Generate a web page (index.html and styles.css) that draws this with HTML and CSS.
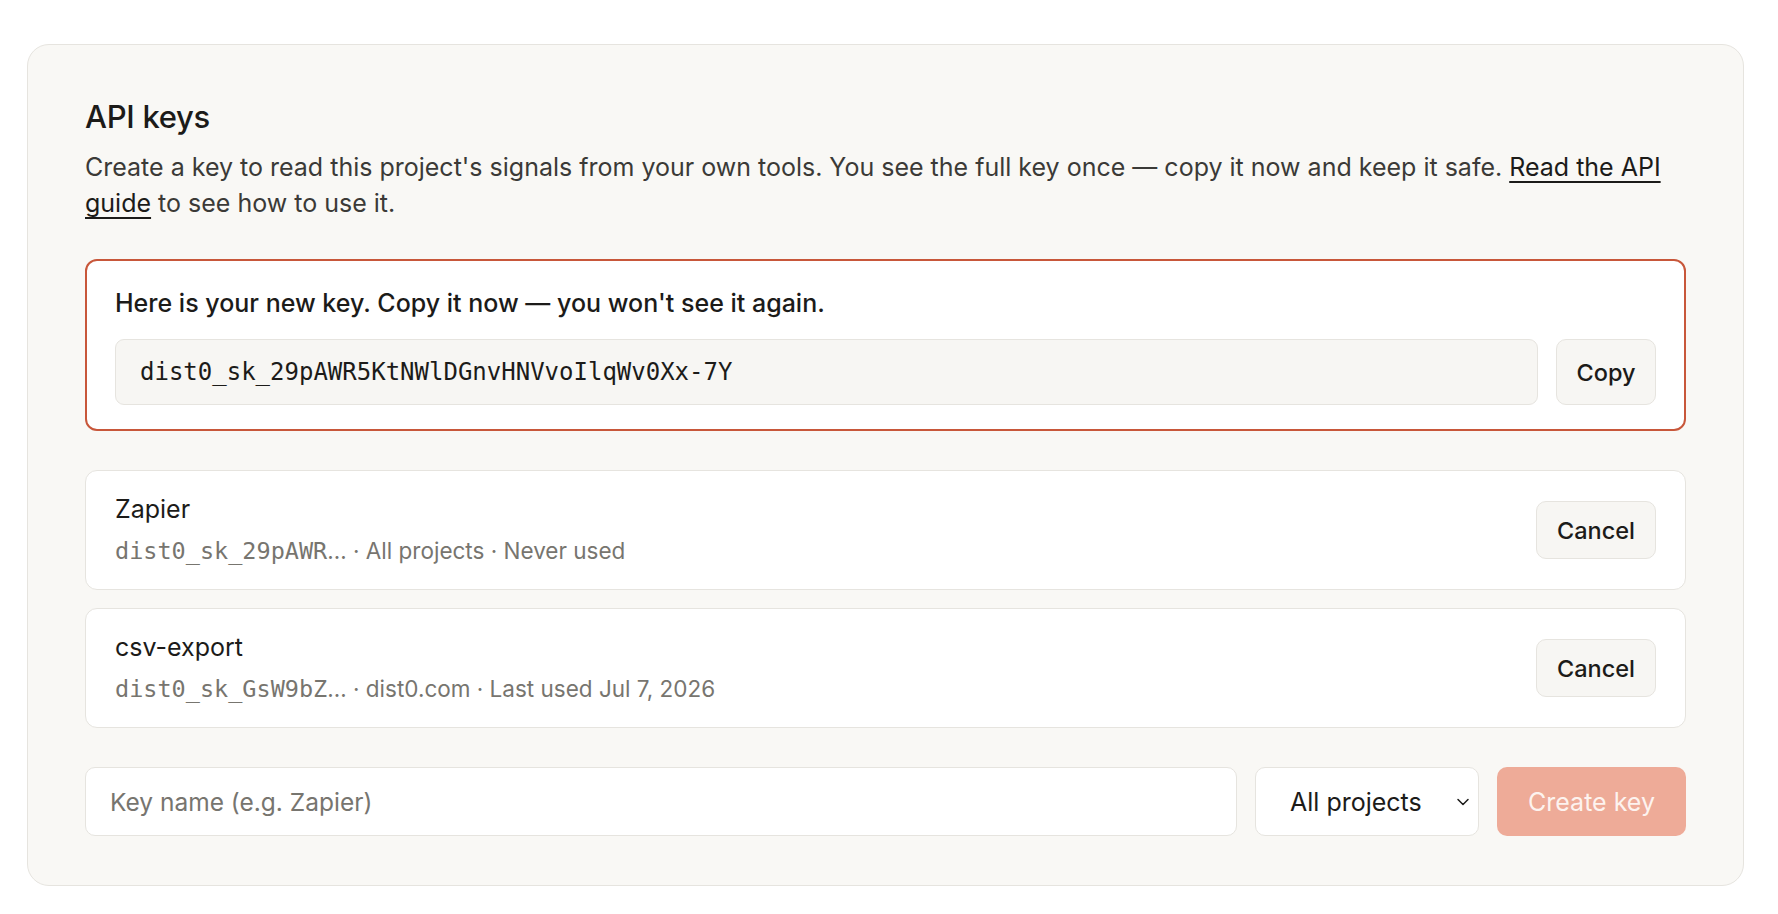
FILE: index.html
```html
<!DOCTYPE html>
<html lang="en">
<head>
    <meta charset="UTF-8">
    <meta name="viewport" content="width=device-width, initial-scale=1.0">
    <title>API keys</title>
    <link rel="stylesheet" href="styles.css">
</head>
<body>

    <!-- API keys settings card -->
    <section class="card">
        <h2 class="card-title">API keys</h2>
        <p class="card-desc">
            Create a key to read this project's signals from your own tools. You see the full key once — copy it now and keep it safe. <a href="#">Read the API guide</a> to see how to use it.
        </p>

        <!-- Freshly created key, shown only once -->
        <div class="new-key">
            <p class="new-key-title">Here is your new key. Copy it now — you won't see it again.</p>
            <div class="new-key-row">
                <div class="key-field">dist0_sk_29pAWR5KtNWlDGnvHNVvoIlqWv0Xx-7Y</div>
                <button class="btn">Copy</button>
            </div>
        </div>

        <!-- Existing keys -->
        <ul class="key-list">
            <li class="key-item">
                <div class="key-info">
                    <div class="key-name">Zapier</div>
                    <div class="key-meta"><span class="mono">dist0_sk_29pAWR</span>… · All projects · Never used</div>
                </div>
                <button class="btn">Cancel</button>
            </li>
            <li class="key-item">
                <div class="key-info">
                    <div class="key-name">csv-export</div>
                    <div class="key-meta"><span class="mono">dist0_sk_GsW9bZ</span>… · dist0.com · Last used Jul 7, 2026</div>
                </div>
                <button class="btn">Cancel</button>
            </li>
        </ul>

        <!-- Create form -->
        <form class="create-form" onsubmit="return false">
            <input class="name-input" type="text" placeholder="Key name (e.g. Zapier)">
            <div class="select-wrap">
                <select class="project-select">
                    <option>All projects</option>
                    <option>dist0.com</option>
                </select>
                <svg class="chevron" width="14" height="14" viewBox="0 0 14 14" fill="none" stroke="#1c1b19" stroke-width="1.5" stroke-linecap="round" stroke-linejoin="round"><path d="M2 4.5l5 5 5-5"/></svg>
            </div>
            <button class="btn-primary" disabled>Create key</button>
        </form>
    </section>

</body>
</html>
```

FILE: styles.css
```css
body {
    margin: 0;
    background-color: #fff;
    font-family: Inter, "Noto Sans", sans-serif;
    color: #1c1b19;
    padding: 44px 34px 27px 27px;
}
.card {
    background-color: #f9f8f5;
    border: 1px solid #e6e4df;
    border-radius: 22px;
    padding: 53px 57px 49px;
}
.card-title {
    margin: 0;
    font-size: 31px;
    font-weight: 500;
    line-height: 38px;
    letter-spacing: -0.3px;
}
.card-desc {
    margin: 13px 0 38px;
    font-size: 25px;
    line-height: 36px;
    color: #3b3a37;
}
.card-desc a {
    color: #1c1b19;
    text-decoration: underline;
    text-underline-offset: 5px;
    text-decoration-thickness: 2px;
}
.new-key {
    background-color: #fff;
    border: 2px solid #c8573a;
    border-radius: 12px;
    padding: 27px 28px 24px;
}
.new-key-title {
    margin: 0 0 21px;
    font-size: 25px;
    font-weight: 500;
    line-height: 30px;
}
.new-key-row {
    display: flex;
    gap: 18px;
}
.key-field {
    flex: 1;
    background-color: #f7f6f3;
    border: 1px solid #e6e4df;
    border-radius: 9px;
    height: 66px;
    box-sizing: border-box;
    display: flex;
    align-items: center;
    padding: 0 24px;
    font-family: "DejaVu Sans Mono", monospace;
    font-size: 24px;
    color: #1c1b19;
}
.btn {
    font-family: inherit;
    font-size: 23.5px;
    font-weight: 500;
    color: #1c1b19;
    background-color: #f7f6f3;
    border: 1px solid #e6e4df;
    border-radius: 10px;
    padding: 0 16px;
    cursor: pointer;
}
.new-key-row .btn {
    height: 66px;
    width: 100px;
}
.key-list {
    list-style: none;
    margin: 39px 0 0;
    padding: 0;
    display: flex;
    flex-direction: column;
    gap: 18px;
}
.key-item {
    background-color: #fff;
    border: 1px solid #e6e4df;
    border-radius: 12px;
    padding: 0 29px;
    height: 120px;
    box-sizing: border-box;
    display: flex;
    align-items: center;
    justify-content: space-between;
}
.key-name {
    font-size: 25px;
    line-height: 30px;
}
.key-meta {
    margin-top: 12px;
    font-size: 22.5px;
    line-height: 30px;
    color: #77756f;
}
.mono {
    font-family: "DejaVu Sans Mono", monospace;
    font-size: 23.5px;
}
.key-item .btn {
    height: 58px;
    width: 120px;
}
.create-form {
    margin-top: 39px;
    display: flex;
    gap: 18px;
    height: 69px;
}
.name-input {
    flex: 1;
    font-family: inherit;
    font-size: 24.5px;
    color: #1c1b19;
    background-color: #fff;
    border: 1px solid #e6e4df;
    border-radius: 10px;
    padding: 0 24px;
}
.name-input::placeholder {
    color: #77756f;
}
.select-wrap {
    position: relative;
    width: 224px;
}
.project-select {
    appearance: none;
    width: 100%;
    height: 100%;
    font-family: inherit;
    font-size: 25px;
    color: #1c1b19;
    background-color: #fff;
    border: 1px solid #e6e4df;
    border-radius: 10px;
    padding: 0 34px;
}
.chevron {
    position: absolute;
    right: 9px;
    top: 28px;
    pointer-events: none;
}
.btn-primary {
    width: 189px;
    font-family: inherit;
    font-size: 25px;
    font-weight: 400;
    color: #fdf3ef;
    background-color: #eeab98;
    border: none;
    border-radius: 10px;
}
```
